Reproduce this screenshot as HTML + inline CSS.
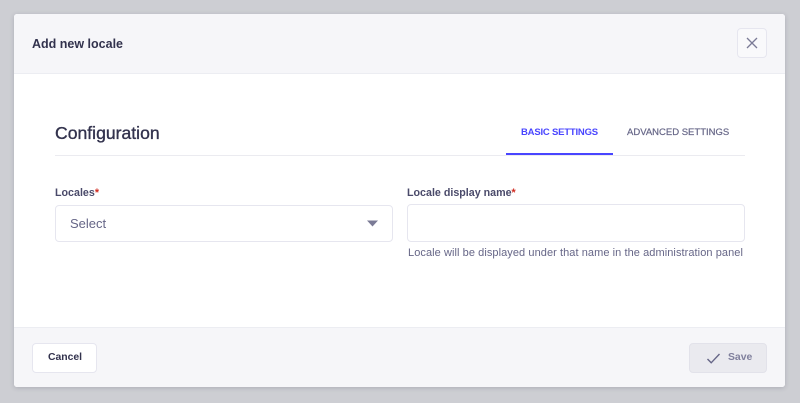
<!DOCTYPE html>
<html>
<head>
<meta charset="utf-8">
<style>
html,body{margin:0;padding:0;width:800px;height:403px;overflow:hidden;background:#cdced3;font-family:"Liberation Sans",sans-serif;}
#w{position:absolute;left:0;top:0;width:800px;height:403px;filter:blur(.35px);}
.a{position:absolute;white-space:nowrap;}
#modal{position:absolute;left:14px;top:14px;width:771px;height:373px;background:#fff;border-radius:3px;box-shadow:0 1px 5px rgba(60,60,80,.22);overflow:hidden;}
.bar{position:absolute;left:14px;width:771px;background:#f6f6f9;}
.box{position:absolute;box-sizing:border-box;background:#fff;border:1px solid #e6e6ef;border-radius:4px;}
</style>
</head>
<body>
<div id="w">
<div id="modal"></div>
<div class="bar" style="top:14px;height:59px;border-radius:3px 3px 0 0;border-bottom:1px solid #ecedf2;"></div>
<div class="bar" style="top:327px;height:60px;border-radius:0 0 3px 3px;border-top:1px solid #ecedf2;box-sizing:border-box;"></div>

<div class="a" style="left:32px;top:36px;font-size:12.5px;line-height:16px;font-weight:bold;color:#32324d;">Add new locale</div>
<div class="box" style="left:737px;top:28px;width:30px;height:30px;background:#f9f9fb;"></div>
<svg class="a" style="left:745px;top:36px;" width="14" height="14" viewBox="0 0 14 14"><path d="M2 2L12 12M12 2L2 12" stroke="#7b7b96" stroke-width="1.3" fill="none"/></svg>

<div class="a" style="left:55px;top:123px;font-size:17.6px;line-height:21px;font-weight:normal;color:#32324d;-webkit-text-stroke:.35px #32324d;">Configuration</div>
<div class="a" style="left:55px;top:155px;width:690px;height:1px;background:#ebebf0;"></div>
<div class="a" style="left:521px;top:126px;font-size:9.5px;letter-spacing:-.2px;line-height:14px;font-weight:bold;color:#4945ff;">BASIC SETTINGS</div>
<div class="a" style="left:627px;top:126px;font-size:9.5px;line-height:14px;color:#666687;-webkit-text-stroke:.2px #666687;">ADVANCED SETTINGS</div>
<div class="a" style="left:506px;top:153px;width:107px;height:2px;background:#4945ff;"></div>

<div class="a" style="left:55px;top:186px;font-size:10.7px;line-height:14px;font-weight:bold;color:#4a4a6a;">Locales<span style="color:#d02b20;">*</span></div>
<div class="box" style="left:55px;top:205px;width:338px;height:37px;"></div>
<div class="a" style="left:70px;top:216px;font-size:13px;line-height:16px;color:#666687;">Select</div>
<svg class="a" style="left:366px;top:219px;" width="14" height="9" viewBox="0 0 14 9"><path d="M1 1.5H12L6.5 7.5Z" fill="#7b7b96"/></svg>

<div class="a" style="left:407px;top:186px;font-size:10.7px;line-height:14px;font-weight:bold;color:#4a4a6a;">Locale display name<span style="color:#d02b20;">*</span></div>
<div class="box" style="left:407px;top:204px;width:338px;height:38px;"></div>
<div class="a" style="left:408px;top:246px;font-size:11px;letter-spacing:.07px;line-height:14px;color:#666687;">Locale will be displayed under that name in the administration panel</div>

<div class="box" style="left:32px;top:343px;width:65px;height:30px;"></div>
<div class="a" style="left:48px;top:350px;font-size:10.4px;line-height:15px;font-weight:bold;color:#32324d;">Cancel</div>

<div class="box" style="left:689px;top:343px;width:78px;height:30px;background:#eaeaef;border-color:#e2e2ea;"></div>
<svg class="a" style="left:706px;top:352px;" width="15" height="13" viewBox="0 0 15 13"><path d="M1.5 7L5.2 10.8L13.5 2" stroke="#666687" stroke-width="1.4" fill="none"/></svg>
<div class="a" style="left:728px;top:350px;font-size:10.4px;line-height:15px;font-weight:bold;color:#7f7f9c;">Save</div>
</div>
</body>
</html>
